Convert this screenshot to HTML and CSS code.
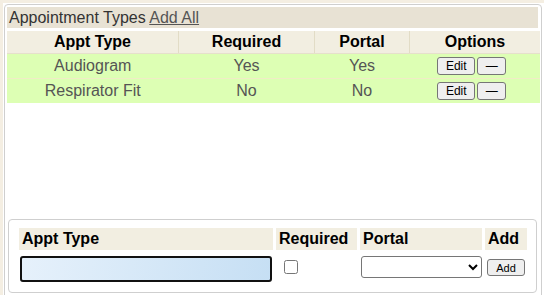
FILE: index.html
```html
<!DOCTYPE html>
<html>
<head>
<meta charset="utf-8">
<link rel="stylesheet" href="styles.css">
</head>
<body>
<div class="page">
  <div class="panel">
    <div class="types">
      <div class="title">Appointment Types <a href="#" class="add-all">Add All</a></div>
      <table class="list">
        <thead>
          <tr>
            <th class="c1">Appt Type</th>
            <th class="c2">Required</th>
            <th class="c3">Portal</th>
            <th class="c4">Options</th>
          </tr>
        </thead>
        <tbody>
          <tr>
            <td>Audiogram</td>
            <td>Yes</td>
            <td>Yes</td>
            <td class="opts"><div class="opt-btns"><button class="btn edit">Edit</button><button class="btn del">—</button></div></td>
          </tr>
          <tr>
            <td>Respirator Fit</td>
            <td>No</td>
            <td>No</td>
            <td class="opts"><div class="opt-btns"><button class="btn edit">Edit</button><button class="btn del">—</button></div></td>
          </tr>
        </tbody>
      </table>
    </div>
    <div class="add-box">
      <table class="add-form">
        <tr>
          <th class="a1">Appt Type</th>
          <th class="a2">Required</th>
          <th class="a3">Portal</th>
          <th class="a4">Add</th>
        </tr>
        <tr>
          <td class="f1"><input type="text" class="type-input"></td>
          <td class="f2"><input type="checkbox" class="req"></td>
          <td class="f3"><select class="portal"><option></option></select></td>
          <td class="f4"><button class="btn add">Add</button></td>
        </tr>
      </table>
    </div>
  </div>
</div>
</body>
</html>
```

FILE: styles.css
```css
html, body {
  margin: 0;
  padding: 0;
}
body {
  background: #f4eee2;
  font-family: "Liberation Sans", Arial, sans-serif;
  font-size: 16px;
  overflow: hidden;
  height: 295px;
}
.page {
  margin: 3px 0 0 3px;
  background: #fff;
  padding: 1px 2px 0 1px;
  height: 291px;
  overflow: hidden;
}
.panel {
  border: 1px solid #cfcfcf;
  border-radius: 4px;
  padding: 2px 3px 2px 2px;
  height: 380px;
  background: #fff;
}
.types {
  height: 212px;
}
.title {
  background: #e8e2d4;
  color: #333;
  height: 21px;
  line-height: 21px;
  padding-left: 2px;
  margin-bottom: 3px;
}
.add-all {
  color: #555;
  text-decoration: underline;
}
.list {
  width: 530px;
  border-collapse: collapse;
  table-layout: fixed;
}
.list th {
  background: #f2eee1;
  color: #000;
  font-weight: bold;
  height: 22px;
  padding: 0;
  border-left: 1px solid #e2dcc6;
  border-bottom: 1px solid #e6e0cc;
}
.list th:first-child {
  border-left: none;
}
.c1 { width: 171px; }
.c2 { width: 135px; }
.c3 { width: 94px; }
.c4 { width: 130px; }
.list td {
  background: #ddffb4;
  color: #555;
  text-align: center;
  height: 24px;
  padding: 0;
  border-bottom: 1px solid #f0ecc6;
}
.list tr:last-child td {
  border-bottom: none;
}
.opt-btns {
  display: flex;
  justify-content: center;
  align-items: center;
  gap: 2px;
  padding-right: 6px;
}
.btn {
  font-family: "Liberation Sans", Arial, sans-serif;
  background: #efefef;
  border: 1px solid #767676;
  border-radius: 3px;
  color: #000;
  padding: 0;
  vertical-align: middle;
}
.edit {
  width: 38px;
  height: 18px;
  font-size: 12px;
}
.del {
  width: 29px;
  height: 18px;
  font-size: 12px;
}
.add-box {
  margin-left: 1px;
  border: 1px solid #cfcfcf;
  border-radius: 4px;
  padding: 5px 6px 4px 7px;
  width: 514px;
}
.add-form {
  border-collapse: separate;
  border-spacing: 3px;
  table-layout: fixed;
  width: 508px;
}
.add-form th {
  background: #f2eee1;
  color: #000;
  font-weight: bold;
  text-align: left;
  height: 22px;
  padding: 0 0 0 3px;
}
.a1 { width: 251px; }
.a2 { width: 78px; }
.a3 { width: 119px; }
.a4 { width: 39px; }
.add-form td {
  padding: 0 0 0 1px;
  height: 32px;
}
.type-input {
  box-sizing: border-box;
  width: 252px;
  height: 26px;
  border: 2px solid #111;
  border-radius: 3px;
  background: linear-gradient(100deg, #e6f1fb 0%, #c6dff4 100%);
  margin: 0;
  display: block;
  outline: none;
}
.req {
  margin: 0 0 0 7px;
  width: 14px;
  height: 14px;
  vertical-align: middle;
  position: relative;
  top: -3px;
}
.portal {
  width: 121px;
  height: 22px;
  border: 1px solid #767676;
  border-radius: 3px;
  background: #fff;
  margin: 0;
  position: relative;
  top: -2px;
}
.f4 {
  text-align: left;
}
.add {
  width: 38px;
  height: 17px;
  font-size: 11px;
  margin-left: 1px;
  position: relative;
  top: -2px;
}
```
